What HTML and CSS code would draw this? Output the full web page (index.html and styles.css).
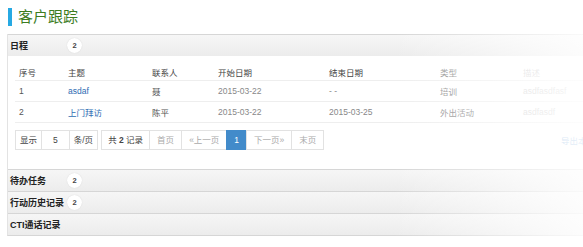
FILE: index.html
```html
<!DOCTYPE html>
<html lang="zh-CN">
<head>
    <meta charset="UTF-8">
    <title>客户跟踪</title>
    <link rel="stylesheet" href="styles.css">
</head>
<body>
    <div class="page">
        <h1 class="title">客户跟踪</h1>

        <div class="panel">
            <div class="panel-head">日程 <span class="badge">2</span></div>
            <div class="panel-body">
                <table class="grid">
                    <thead>
                        <tr>
                            <th class="c-no">序号</th>
                            <th class="c-subject">主题</th>
                            <th class="c-contact">联系人</th>
                            <th class="c-start">开始日期</th>
                            <th class="c-end">结束日期</th>
                            <th class="c-type muted">类型</th>
                            <th class="c-desc faint">描述</th>
                        </tr>
                    </thead>
                    <tbody>
                        <tr>
                            <td>1</td>
                            <td><a href="#">asdaf</a></td>
                            <td>聂</td>
                            <td class="muted">2015-03-22</td>
                            <td class="muted">- -</td>
                            <td class="muted">培训</td>
                            <td class="faint">asdfasdfasf</td>
                        </tr>
                        <tr>
                            <td>2</td>
                            <td><a href="#">上门拜访</a></td>
                            <td>陈平</td>
                            <td class="muted">2015-03-22</td>
                            <td class="muted">2015-03-25</td>
                            <td class="muted">外出活动</td>
                            <td class="faint">asdfasdf</td>
                        </tr>
                    </tbody>
                </table>

                <div class="pager-row">
                    <ul class="pager">
                        <li class="label">显示</li>
                        <li class="num">5</li>
                        <li class="label">条/页</li>
                    </ul>
                    <ul class="pager">
                        <li class="total">共 <b>2</b> 记录</li>
                        <li class="off">首页</li>
                        <li class="off">«上一页</li>
                        <li class="current">1</li>
                        <li class="off">下一页»</li>
                        <li class="off">末页</li>
                    </ul>
                    <a href="#" class="export">导出本页</a>
                </div>
            </div>
            <div class="panel-head">待办任务 <span class="badge">2</span></div>
            <div class="panel-head">行动历史记录 <span class="badge">2</span></div>
            <div class="panel-head">CTI通话记录</div>
        </div>
    </div>
    <div class="fade"></div>
</body>
</html>
```

FILE: styles.css
```css
body {
    margin: 0;
    background: #fff;
    font-family: "Liberation Sans", "Noto Sans CJK SC", sans-serif;
    color: #333;
    overflow: hidden;
}

.page {
    padding: 8px 0 0 7px;
    width: 640px;
}

.title {
    margin: 0 0 8px 1px;
    border-left: 4px solid #27a9e3;
    padding-left: 6px;
    font-size: 15px;
    font-weight: normal;
    line-height: 18px;
    color: #3d7d1f;
}

.panel {
    border-left: 1px solid #e3e3e3;
    border-bottom: 1px solid #d6d6d6;
}

.panel-head {
    position: relative;
    display: flex;
    align-items: center;
    height: 21px;
    padding-left: 2px;
    border-top: 1px solid #d6d6d6;
    background: linear-gradient(to bottom, #f6f6f6, #ececec);
    font-size: 9px;
    font-weight: bold;
    color: #222;
}

.badge {
    position: absolute;
    left: 59px;
    top: 3px;
    width: 15px;
    height: 15px;
    border-radius: 50%;
    background: #fff;
    box-shadow: 0 0 1px #ccc;
    font-size: 7.5px;
    line-height: 15px;
    text-align: center;
    color: #444;
}

.panel-body {
    padding: 7px 0 19px 7px;
    background: #fff;
}

.grid {
    border-collapse: collapse;
    width: 600px;
    font-size: 8.5px;
}

.grid th,
.grid td {
    text-align: left;
    padding: 0 0 0 4px;
    border-bottom: 1px solid #eee;
    white-space: nowrap;
}

.grid th {
    height: 17px;
    font-weight: normal;
    color: #444;
}

.grid td {
    height: 20px;
    color: #555;
}

.grid a {
    color: #2e6cb3;
    text-decoration: none;
}

.grid .muted {
    color: #888;
}

.grid .faint {
    color: #ccc;
}

.c-no { width: 45px; }
.c-subject { width: 80px; }
.c-contact { width: 62px; }
.c-start { width: 107px; }
.c-end { width: 107px; }
.c-type { width: 79px; }

.pager-row {
    display: flex;
    align-items: center;
    gap: 4px;
    margin-top: 7px;
    margin-left: 1px;
}

.pager {
    display: flex;
    list-style: none;
    margin: 0;
    padding: 0;
}

.pager li {
    height: 18px;
    padding: 0 7px;
    border: 1px solid #e2e2e2;
    margin-left: -1px;
    font-size: 8.5px;
    line-height: 18px;
    color: #444;
}

.pager li.label {
    padding: 0 4px;
}

.pager li.num {
    padding: 0 11px;
}

.pager li.total {
    padding: 0 6px;
}

.pager li.off {
    color: #aaa;
}

.pager li.current {
    border-color: #428bca;
    background: #428bca;
    color: #fff;
}

.export {
    margin-left: auto;
    margin-right: 52px;
    font-size: 8.5px;
    color: #6aa3d9;
    text-decoration: none;
}

.fade {
    position: absolute;
    top: 0;
    right: 0;
    width: 190px;
    height: 247px;
    background: linear-gradient(to right, rgba(255, 255, 255, 0), rgba(255, 255, 255, 0.85));
    pointer-events: none;
}
```
